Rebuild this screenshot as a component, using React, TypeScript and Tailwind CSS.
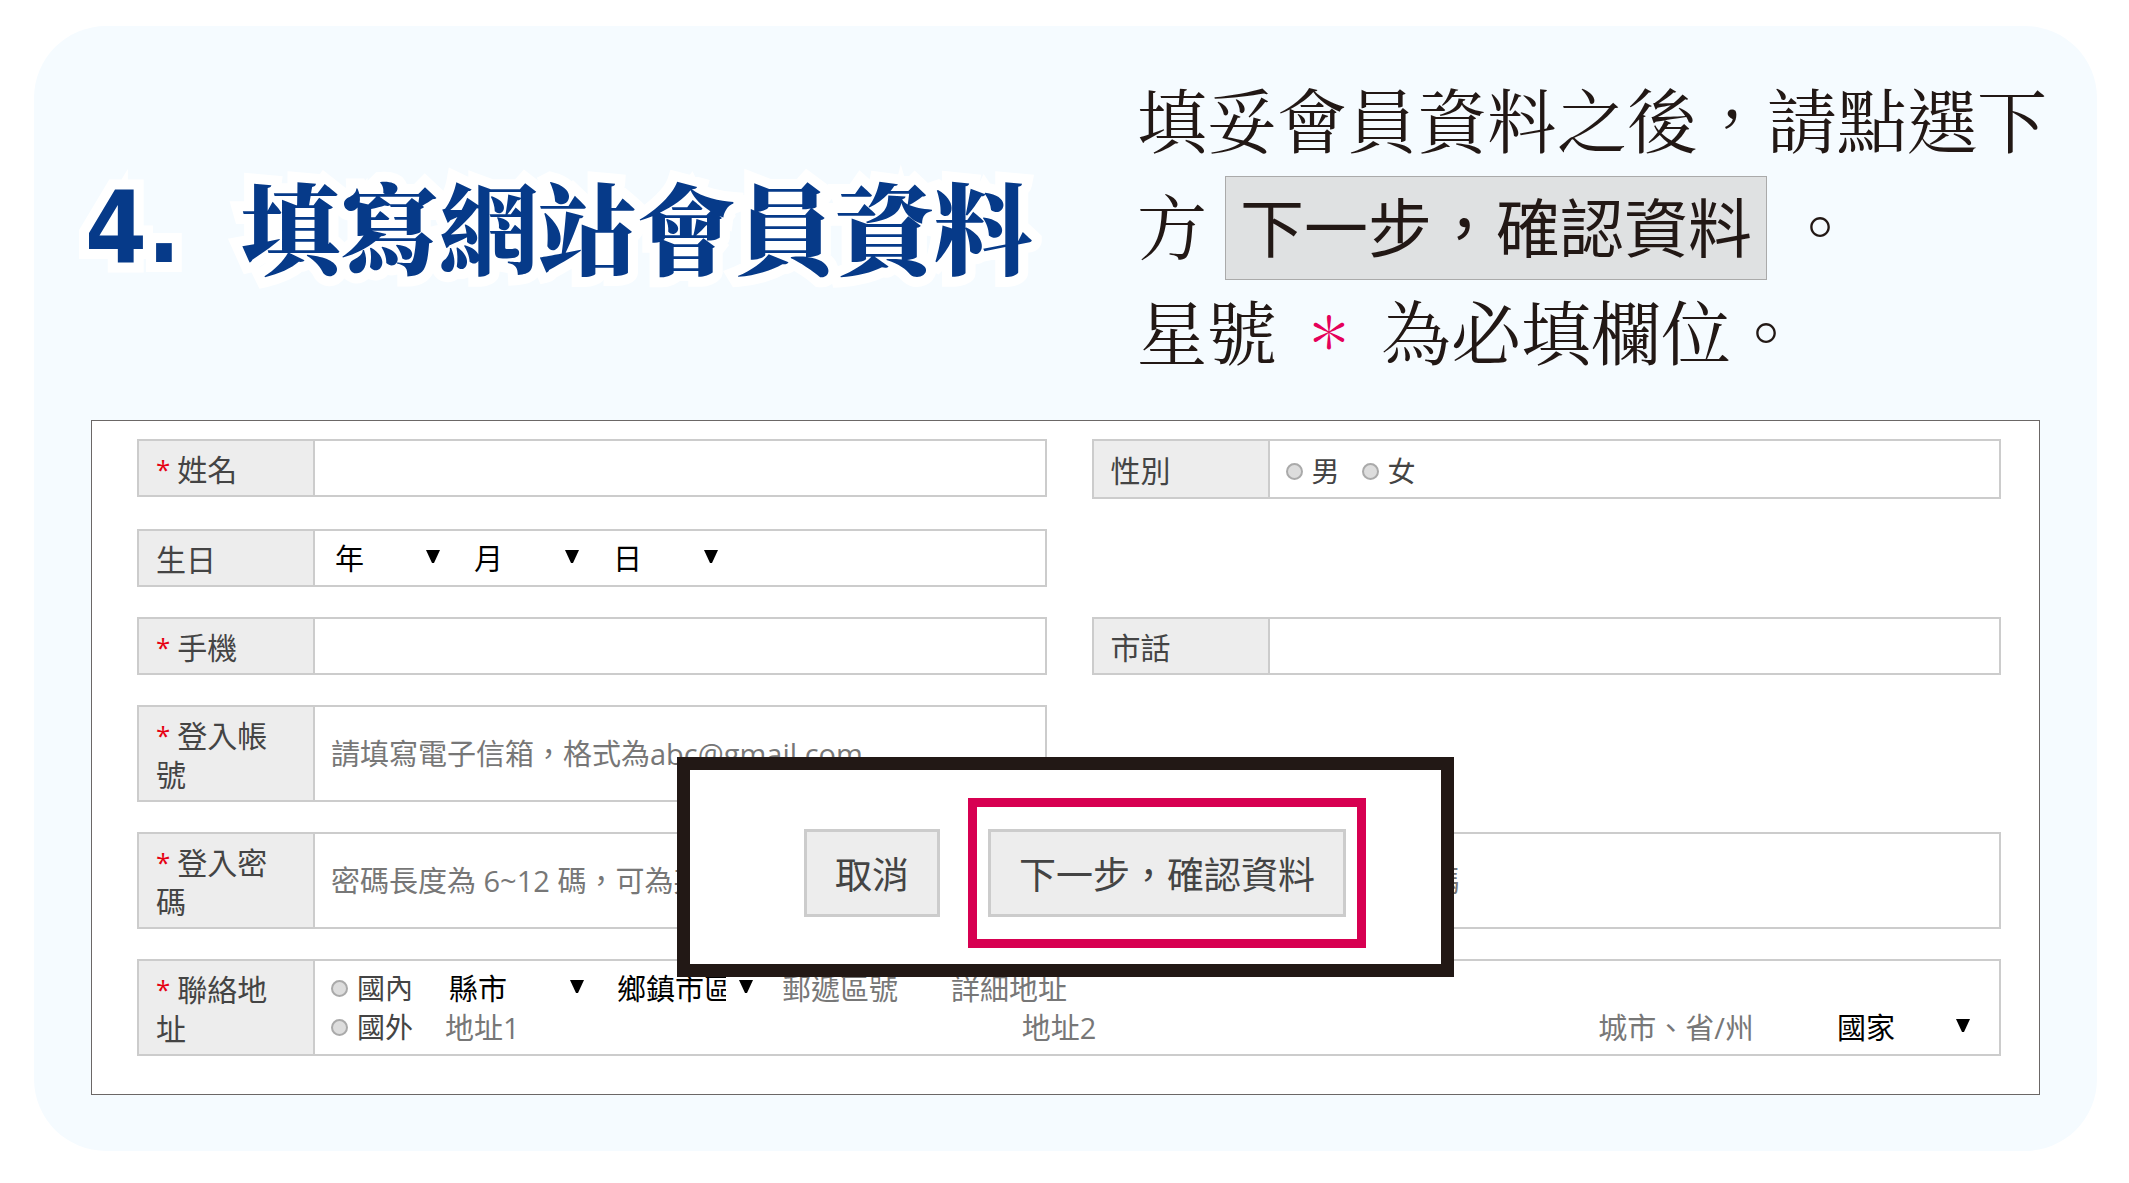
import type { ReactNode } from "react";

const serif = "font-['Noto_Serif_CJK_TC','Noto_Sans_CJK_TC',serif]";
const sans = "font-['Open_Sans','Noto_Sans_CJK_TC',sans-serif]";

function Field({
  id,
  lines,
  required = false,
  size = "h-[58px]",
  wide = false,
  children,
}: {
  id?: string;
  lines: string[];
  required?: boolean;
  size?: string;
  wide?: boolean;
  children: ReactNode;
}) {
  const content = (
    <>
      <span className="flex gap-[7px]">
        {required && <span className="text-[26px] text-[#e60012]">*</span>}
        <span>{lines[0]}</span>
      </span>
      {lines[1] && <span className="block">{lines[1]}</span>}
    </>
  );
  const labelClass =
    "flex w-[176px] shrink-0 flex-col justify-center border-r-2 border-[#ccc] bg-[#ededed] pl-[17px] pt-[2px] text-[30px] leading-[39px] text-[#444]";
  return (
    <div className={`flex border-2 border-[#ccc] bg-white ${size} ${wide ? "col-span-2" : ""}`}>
      {id ? (
        <label htmlFor={id} className={labelClass}>
          {content}
        </label>
      ) : (
        <div className={labelClass}>{content}</div>
      )}
      <div className="flex min-w-0 flex-1 items-center">{children}</div>
    </div>
  );
}

function TextInput({
  id,
  type = "text",
  placeholder,
  label,
  className = "",
}: {
  id?: string;
  type?: string;
  placeholder?: string;
  label?: string;
  className?: string;
}) {
  return (
    <input
      id={id}
      type={type}
      aria-label={label}
      placeholder={placeholder}
      className={`min-w-0 bg-transparent text-[29px] leading-[39px] text-[#444] outline-none placeholder:text-[#777] placeholder:opacity-100 ${className}`}
    />
  );
}

function Select({
  label,
  text,
  inset = "pr-[26px]",
  className = "",
}: {
  label: string;
  text: string;
  inset?: string;
  className?: string;
}) {
  return (
    <div className={`relative min-w-0 ${className}`}>
      <select
        aria-label={label}
        className={`block h-[39px] w-full appearance-none bg-transparent pl-1 text-[29px] leading-[39px] text-black outline-none ${inset}`}
      >
        <option>{text}</option>
      </select>
      <svg
        viewBox="0 0 14 14"
        className="pointer-events-none absolute right-[7px] top-[11px] size-[14px]"
        aria-hidden="true"
      >
        <path d="M0 0H14L8 13H6Z" fill="#000" />
      </svg>
    </div>
  );
}

function Radio({ name, text }: { name: string; text: string }) {
  return (
    <label className="flex h-[39px] shrink-0 items-center gap-[9px] text-[28px] leading-[39px] text-[#444]">
      <input
        type="radio"
        name={name}
        className="size-[17px] appearance-none rounded-full border-2 border-[#aaa] bg-[#ddd] checked:bg-[#555]"
      />
      {text}
    </label>
  );
}

function Header() {
  return (
    <header className="flex items-center pb-[37px] pl-[51px] pr-[49px] pt-[39px]">
      <h1 className="flex flex-1 items-center gap-[60px] whitespace-nowrap text-[99px] leading-[106px] text-[#063a89] [paint-order:stroke_fill] [-webkit-text-stroke:20px_white] [stroke-linejoin:round]">
        <span className="pt-2 font-['DejaVu_Sans_Condensed','DejaVu_Sans',sans-serif] font-bold">4.</span>
        <span className={`${serif} font-black`}>填寫網站會員資料</span>
      </h1>
      <div className={`${serif} w-[911px] shrink-0 whitespace-nowrap text-[70px] leading-[106px] text-[#221815]`}>
        <p>填妥會員資料之後，請點選下</p>
        <div className="flex h-[106px] items-center gap-[18px]">
          <span>方</span>
          <button
            type="button"
            className="mt-2 h-[104px] border border-[#aaa] bg-[#dfe1e2] px-[14px] pb-2 font-['Noto_Sans_CJK_TC',sans-serif] text-[64px] leading-[94px]"
          >
            下一步，確認資料
          </button>
          <span>。</span>
        </div>
        <p className="flex gap-[17px]">
          <span>星號</span>
          <span className="w-[70px] text-center text-[44px] font-semibold text-[#e5005a]">＊</span>
          <span>為必填欄位。</span>
        </p>
      </div>
    </header>
  );
}

function ActionBox() {
  const button = "h-[88px] border-[3px] border-[#ccc] bg-[#ededed] px-[28px] pt-1 text-[37px] text-[#444]";
  return (
    <div className="absolute left-[585px] top-[336px] flex items-center gap-7 border-[13px] border-[#221815] bg-white pb-4 pl-[114px] pr-[75px] pt-7">
      <button type="button" className={button}>
        取消
      </button>
      <div className="border-[9px] border-[#d70051] px-[11px] py-[22px]">
        <button type="submit" className={`${button} block`}>
          下一步，確認資料
        </button>
      </div>
    </div>
  );
}

export default function App() {
  return (
    <div className="flow-root bg-white pb-8">
      <main className="ml-[34px] mr-8 mt-[26px] rounded-[72px] bg-[#f5fbff] pb-14">
        <Header />
        <form
          onSubmit={(e) => e.preventDefault()}
          className={`${sans} relative mx-[57px] grid grid-cols-2 items-start gap-x-[45px] gap-y-[30px] border border-[#6b6766] bg-white pb-[38px] pl-[45px] pr-[38px] pt-[18px]`}
        >
          <Field id="name" lines={["姓名"]} required>
            <TextInput id="name" className="h-full flex-1 px-4" />
          </Field>
          <Field lines={["性別"]} size="h-[60px]">
            <div className="flex gap-[22px] pl-4 pt-1">
              <Radio name="gender" text="男" />
              <Radio name="gender" text="女" />
            </div>
          </Field>

          <Field lines={["生日"]}>
            <div className="flex gap-[23px] pl-4">
              <Select label="年" text="年" className="w-[116px]" />
              <Select label="月" text="月" className="w-[116px]" />
              <Select label="日" text="日" className="w-[116px]" />
            </div>
          </Field>
          <div />

          <Field id="mobile" lines={["手機"]} required>
            <TextInput id="mobile" type="tel" className="h-full flex-1 px-4" />
          </Field>
          <Field id="phone" lines={["市話"]}>
            <TextInput id="phone" type="tel" className="h-full flex-1 px-4" />
          </Field>

          <Field id="account" lines={["登入帳", "號"]} required size="h-[97px]">
            <TextInput
              id="account"
              type="email"
              placeholder="請填寫電子信箱，格式為abc@gmail.com"
              className="h-full flex-1 px-4"
            />
          </Field>
          <div />

          <Field id="password" lines={["登入密", "碼"]} required size="h-[97px]">
            <TextInput
              id="password"
              type="password"
              placeholder="密碼長度為 6~12 碼，可為英數"
              className="h-full flex-1 px-4"
            />
          </Field>
          <Field lines={[]} size="h-[97px]">
            <TextInput
              label="再次輸入密碼"
              type="password"
              placeholder="再次輸入密碼"
              className="h-full flex-1 px-4"
            />
          </Field>

          <Field lines={["聯絡地", "址"]} required size="h-[97px]" wide>
            <div className="flex-1 pl-4 pr-[22px]">
              <div className="flex items-center">
                <Radio name="region" text="國內" />
                <div className="ml-[32px] flex flex-1 gap-[22px]">
                  <Select label="縣市" text="縣市" className="w-[146px]" />
                  <Select label="鄉鎮市區" text="鄉鎮市區" inset="pr-[34px]" className="w-[147px]" />
                  <TextInput label="郵遞區號" placeholder="郵遞區號" className="w-[147px]" />
                  <TextInput label="詳細地址" placeholder="詳細地址" className="flex-1" />
                </div>
              </div>
              <div className="flex items-center">
                <Radio name="region" text="國外" />
                <div className="ml-[32px] flex flex-1 gap-[22px]">
                  <TextInput label="地址1" placeholder="地址1" className="flex-[555]" />
                  <TextInput label="地址2" placeholder="地址2" className="flex-[555]" />
                  <TextInput label="城市、省/州" placeholder="城市、省/州" className="flex-[213]" />
                  <Select label="國家" text="國家" className="flex-[144]" />
                </div>
              </div>
            </div>
          </Field>
          <ActionBox />
        </form>
      </main>
    </div>
  );
}
